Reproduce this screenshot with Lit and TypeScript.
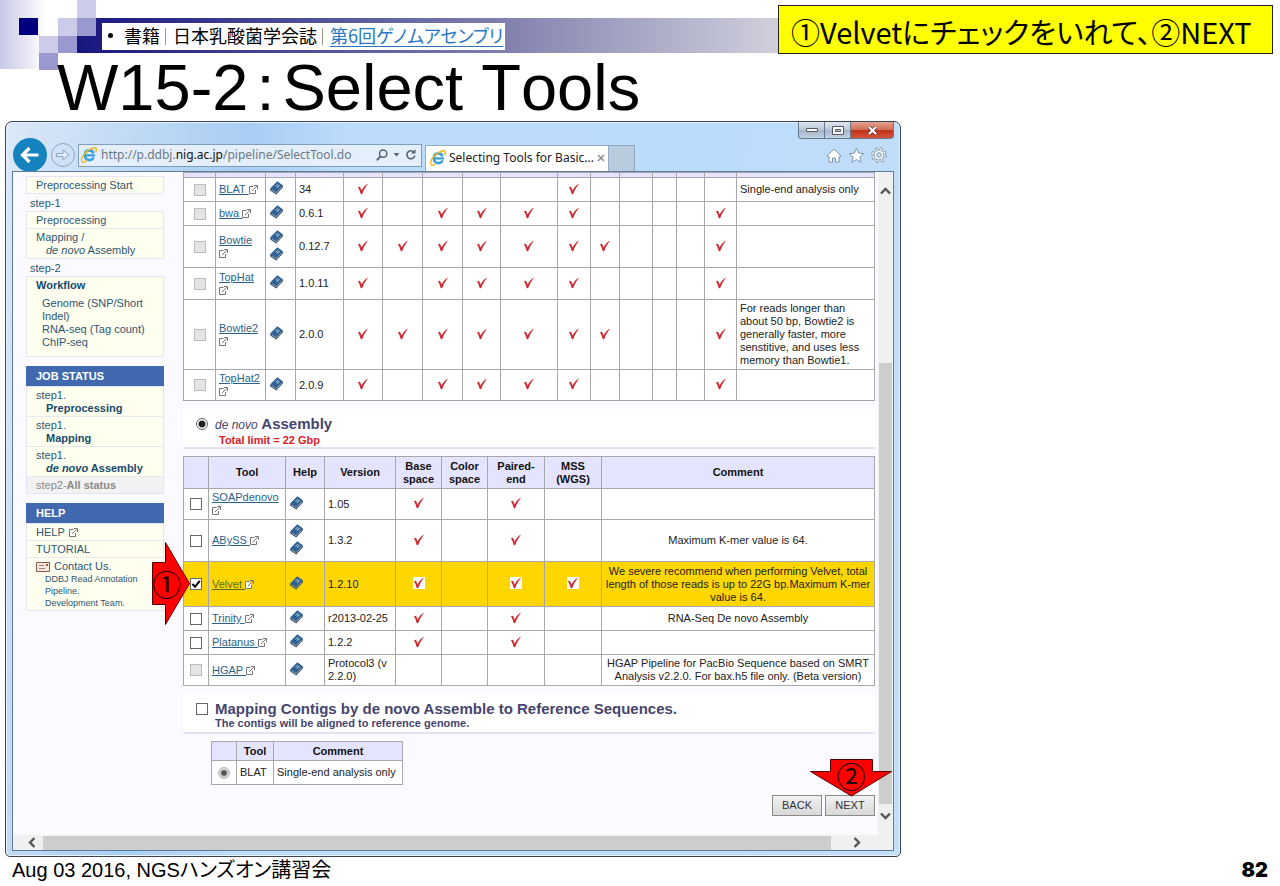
import { LitElement, html, css, svg, nothing } from "lit";
import { customElement } from "lit/decorators.js";
import { classMap } from "lit/directives/class-map.js";

interface Tool {
  name: string;
  version: string;
  size: string;
  checks: number[];
  comment?: string;
  manuals?: number;
  enabled?: boolean;
  selected?: boolean;
}

const MAPPING_TOOLS: Tool[] = [
  { name: "BLAT", version: "34", size: "h24", checks: [0, 5], comment: "Single-end analysis only" },
  { name: "bwa", version: "0.6.1", size: "h24", checks: [0, 2, 3, 4, 5, 10] },
  { name: "Bowtie", version: "0.12.7", size: "h42", checks: [0, 1, 2, 3, 4, 5, 6, 10], manuals: 2 },
  { name: "TopHat", version: "1.0.11", size: "h32", checks: [0, 2, 3, 4, 5, 10] },
  {
    name: "Bowtie2",
    version: "2.0.0",
    size: "h70",
    checks: [0, 1, 2, 3, 4, 5, 6, 10],
    comment:
      "For reads longer than about 50 bp, Bowtie2 is generally faster, more senstitive, and uses less memory than Bowtie1.",
  },
  { name: "TopHat2", version: "2.0.9", size: "h31", checks: [0, 2, 3, 4, 5, 10] },
];

const ASSEMBLY_TOOLS: Tool[] = [
  { name: "SOAPdenovo", version: "1.05", size: "h31", checks: [0, 2], enabled: true },
  {
    name: "ABySS",
    version: "1.3.2",
    size: "h42",
    checks: [0, 2],
    manuals: 2,
    enabled: true,
    comment: "Maximum K-mer value is 64.",
  },
  {
    name: "Velvet",
    version: "1.2.10",
    size: "h45",
    checks: [0, 2, 3],
    enabled: true,
    selected: true,
    comment:
      "We severe recommend when performing Velvet, total length of those reads is up to 22G bp.Maximum K-mer value is 64.",
  },
  {
    name: "Trinity",
    version: "r2013-02-25",
    size: "h24",
    checks: [0, 2],
    enabled: true,
    comment: "RNA-Seq De novo Assembly",
  },
  { name: "Platanus", version: "1.2.2", size: "h24", checks: [0, 2], enabled: true },
  {
    name: "HGAP",
    version: "Protocol3 (v 2.2.0)",
    size: "h31",
    checks: [],
    comment:
      "HGAP Pipeline for PacBio Sequence based on SMRT Analysis v2.2.0. For bax.h5 file only. (Beta version)",
  },
];

const icon = (w: number, h: number, body: unknown, cls = "") =>
  html`<svg class=${cls} width=${w} height=${h} viewBox="0 0 ${w} ${h}" aria-hidden="true">${body}</svg>`;

const externalIcon = () =>
  icon(
    9,
    9,
    svg`<path d="M4.5 1.500H.5v7h6V5" fill="#fff" stroke="#777" /><path d="M3 6 7.800 1.200M5 .5h3.500V4" fill="none" stroke="#777" />`,
    "ext",
  );

const bookIcon = () =>
  icon(
    13,
    14,
    svg`<path d="M.3 7.200 7.300.300 12.800 4.300 6 11z" fill="#2b6196" />
      <path d="M.3 7.200 6 11 12.800 4.300v2.300L6.200 13.500.300 9.400z" fill="#16304c" />
      <path d="M1.300 8.900 6.200 12.200 12 6.200" fill="none" stroke="#c2d4e4" stroke-width=".8" />
      <path d="M5 5.300 7.600 2.700 10 4.500 7.400 7.100z" fill="#9ab6c8" />
      <path d="M5.200 6.800 8.800 3.300" stroke="#1d4268" stroke-width=".8" />`,
    "book",
  );

const checkIcon = () =>
  icon(
    12,
    12,
    svg`<path d="M1 4.300C2 3.500 3.100 3.600 3.500 4.800L4.500 7.600C5.900 4.800 8.200 1.900 11.200.400 8.900 3.200 6.700 6.600 5.500 10.600 4.900 11.500 4 11.400 3.600 10.700 3 8.400 2.100 6.200 1 4.300z" fill="#cf2a30" />`,
    "mark",
  );

const ieIcon = () =>
  icon(
    16,
    16,
    svg`<path d="M12.400 6.600C12 4.600 10.300 3.400 8.300 3.400 5.700 3.400 3.900 5.300 3.900 8.200c0 2.900 1.800 4.900 4.500 4.900 2 0 3.500-.9 4.200-2.700" fill="none" stroke="#3aa0dc" stroke-width="2.600" />
      <path d="M4 8.400h10.100" stroke="#3aa0dc" stroke-width="2.200" />
      <path d="M1.200 14.800C-.8 12.500 2.500 6.800 6.800 3.600 10.400.900 14.400-.200 15.200 1.600c.4.900 0 2.200-.7 3.400" fill="none" stroke="#e9bb26" stroke-width="1.500" />
      <path d="M1.200 14.800c1.100.7 3 .1 4.600-.9" fill="none" stroke="#e9bb26" stroke-width="1.500" />`,
  );

@customElement("app-root")
export class AppRoot extends LitElement {
  static styles = css`
    :host {
      display: block;
      font-family: "Liberation Sans", Arial, sans-serif;
      color: #222;
      background: #fff;
    }
    * {
      box-sizing: border-box;
    }
    h1, h2, p, ul {
      margin: 0;
      padding: 0;
      font-weight: normal;
    }
    ul {
      list-style: none;
    }
    button {
      margin: 0;
      padding: 0;
      border: 0;
      background: none;
      font: inherit;
      color: inherit;
      display: flex;
      align-items: center;
      justify-content: center;
    }
    svg {
      display: block;
      flex: none;
    }

    /* Slide heading */
    .banner {
      background:
        linear-gradient(#000080, #000080) 19px 18px / 19px 17px no-repeat,
        linear-gradient(#ccccea, #ccccea) 77px 0 / 19px 18px no-repeat,
        linear-gradient(#ccccea, #ccccea) 58px 18px / 19px 18px no-repeat,
        linear-gradient(#9999cf, #9999cf) 77px 18px / 19px 18px no-repeat,
        linear-gradient(#ccccea, #ccccea) 39px 36px / 19px 17px no-repeat,
        linear-gradient(#9999cf, #9999cf) 58px 36px / 19px 17px no-repeat,
        linear-gradient(#9999cf, #9999cf) 39px 53px / 19px 17px no-repeat,
        linear-gradient(90deg, #161680, #7f7fae 35%, #cfcfdc 58%, #ffffff) 77px 18px / calc(100% - 77px) 35px no-repeat,
        linear-gradient(90deg, #c8c8e8, #ffffff) 0 0 / 46px 69px no-repeat;
    }
    .banner-row {
      display: flex;
      justify-content: space-between;
      align-items: flex-start;
      padding: 5px 7px 0 102px;
    }
    .crumbs {
      display: flex;
      align-items: center;
      height: 27px;
      margin-top: 18px;
      padding: 0 2px 3px 6px;
      background: #fff;
      color: #000;
      font: 18px/24px "Noto Sans CJK JP", sans-serif;
      font-feature-settings: "palt";
      white-space: nowrap;
    }
    .crumbs i {
      width: 1px;
      height: 17px;
      margin: 2px 7px 0 5px;
      background: #a09a8c;
    }
    .crumbs .dot {
      width: 5px;
      height: 5px;
      margin-right: 11px;
      border-radius: 50%;
      background: #000;
    }
    .crumbs a {
      color: #2a78c4;
      text-underline-offset: 3px;
      text-decoration-thickness: 1px;
    }
    .callout {
      flex: 0 1 495px;
      height: 49px;
      padding: 0 12px;
      border: 1px solid #222;
      background: #ff0;
      color: #000;
      font: 29px/50px "Noto Sans CJK JP", sans-serif;
      font-feature-settings: "palt";
      white-space: nowrap;
    }
    .title {
      height: 67px;
      padding: 2px 0 0 57px;
      color: #000;
      font-size: 65px;
      font-kerning: none;
      line-height: 64px;
    }
    .title span {
      padding: 0 8px;
    }

    /* Browser window */
    .window {
      width: 70%;
      margin-left: 5px;
      padding: 0 6px 5px;
      border: 1px solid #3b4450;
      border-radius: 7px 7px 5px 5px;
      background: linear-gradient(100deg, #dbe8f8 0, #b9d6f4 16%, #a9cdf3 24%, #bddcfb 34%, #bcdcfc 70%, #c3def8 100%);
      box-shadow: inset 0 0 0 1px #e6f2fd;
    }
    .caption {
      display: flex;
      justify-content: flex-end;
      height: 17px;
    }
    .caption button {
      width: 26px;
      height: 17px;
      border: 1px solid #66788c;
      border-top: 0;
      border-right: 0;
      background: linear-gradient(#dfe7f0, #b9c7d6 50%, #a3b4c7 51%, #c3d2e2);
    }
    .caption .min {
      border-radius: 0 0 0 4px;
    }
    .caption .close {
      width: 44px;
      border-right: 1px solid #66788c;
      border-radius: 0 0 4px 0;
      background: linear-gradient(#e5a293, #d06a55 50%, #bd3218 51%, #d5543a);
    }
    .nav {
      display: flex;
      align-items: center;
      height: 32px;
      color: #6b7886;
      font: 12px/16px "Noto Sans", sans-serif;
    }
    .back {
      width: 34px;
      height: 34px;
      margin-left: 1px;
      border-radius: 50%;
      background: #1583bd;
    }
    .forward {
      width: 24px;
      height: 24px;
      margin: 0 3px 0 4px;
      border: 1px solid #8fa5bd;
      border-radius: 50%;
    }
    .address {
      display: flex;
      align-items: center;
      gap: 4px;
      width: 344px;
      height: 23px;
      padding: 0 4px 0 2px;
      border: 1px solid #7f9dbd;
      background: #e4effb;
    }
    .address b {
      font-weight: normal;
      color: #111;
    }
    .address .url {
      flex: 1;
      white-space: nowrap;
    }
    .tab {
      align-self: flex-end;
      display: flex;
      align-items: center;
      gap: 3px;
      width: 184px;
      height: 26px;
      margin-left: 3px;
      padding: 0 5px 2px 4px;
      border: 1px solid #93abc4;
      border-bottom: 0;
      background: #fff;
      color: #222;
      white-space: nowrap;
    }
    .tab .label {
      flex: 1;
    }
    .newtab {
      align-self: flex-end;
      width: 26px;
      height: 26px;
      border: 1px solid #8aa5c0;
      border-width: 1px 1px 0 0;
      background: #b9cbdc;
    }
    .tools {
      display: flex;
      gap: 6px;
      margin-left: auto;
      padding-right: 7px;
    }

    .viewport {
      display: grid;
      grid-template-columns: minmax(0, 1fr) 15px;
      grid-template-rows: auto 15px;
      position: relative;
      border: 1px solid #5d7b9c;
      background: #f0f0f0;
    }
    .page {
      display: flex;
      gap: 19px;
      padding: 0 3px 19px 13px;
      background: #fafaff;
      font-size: 11px;
      line-height: 13px;
    }
    .vbar {
      display: flex;
      flex-direction: column;
      align-items: stretch;
      justify-content: space-between;
      padding: 14px 0 14px;
    }
    .vbar .thumb {
      flex: 1;
      margin: 168px 1px 8px 1px;
      background: #cdcdcd;
    }
    .hbar {
      display: flex;
      align-items: center;
      padding: 0 16px 0 14px;
    }
    .hbar .thumb {
      flex: 1;
      height: 14px;
      margin: 0 22px 0 7px;
      background: #cdcdcd;
    }

    /* Side menu */
    .side {
      flex: 0 0 138px;
      padding-top: 4px;
      color: #2d5674;
    }
    .side a {
      color: inherit;
      text-decoration: none;
    }
    .box {
      border: 1px solid #e4e4f4;
      background: #fffff0;
    }
    .box li {
      padding: 2px 0 1px 9px;
    }
    .box li + li {
      border-top: 1px solid #e8e8ee;
    }
    .step {
      padding: 3px 0 1px 4px;
    }
    .sub {
      display: block;
      padding-left: 10px;
    }
    .flow .item {
      padding-bottom: 7px;
    }
    .flow .sub {
      padding-left: 6px;
    }
    .flow .first {
      padding-top: 5px;
    }
    .flow b,
    .box .strong {
      color: #164a6c;
      font-weight: bold;
    }
    .head {
      height: 20px;
      margin-top: 9px;
      padding-left: 10px;
      background: #4169b0;
      color: #fff;
      font-size: 11px;
      font-weight: bold;
      line-height: 20px;
    }
    .box .off {
      background: #f2f2f2;
      color: #8a8a8a;
    }
    .inline {
      display: flex;
      align-items: center;
      gap: 4px;
    }
    .small {
      display: block;
      padding-left: 9px;
      font-size: 9px;
      line-height: 12px;
    }

    /* Tool tables */
    .main {
      flex: 1;
      min-width: 0;
    }
    table {
      width: 100%;
      table-layout: fixed;
      border-collapse: collapse;
    }
    th,
    td {
      padding: 0 3px;
      border: 1px solid #a8a8ac;
      text-align: left;
      vertical-align: middle;
    }
    td {
      background: #fff;
    }
    th {
      padding: 0 2px;
      background: #e4e4ff;
      color: #111;
      text-align: center;
      font-weight: bold;
    }
    .ctr {
      padding: 0;
      text-align: center;
    }
    .ctr input {
      margin: 0 auto;
    }
    .mark {
      margin: 0 auto 2px;
    }
    td a {
      color: #2b618d;
    }
    .ext {
      display: inline-block;
      vertical-align: -1px;
    }
    .book {
      margin: 0 0 3px 1px;
    }
    .mid {
      text-align: center;
    }
    .h5 { height: 5px; }
    .h19 { height: 19px; }
    .h24 { height: 24px; }
    .h31 { height: 31px; }
    .h32 { height: 32px; }
    .h42 { height: 42px; }
    .h45 { height: 45px; }
    .h70 { height: 70px; }
    .w24 { width: 24px; }
    .w25 { width: 25px; }
    .w28 { width: 28px; }
    .w29 { width: 29px; }
    .w30 { width: 30px; }
    .w32 { width: 32px; }
    .w33 { width: 33px; }
    .w37 { width: 37px; }
    .w38 { width: 38px; }
    .w39 { width: 39px; }
    .w40 { width: 40px; }
    .w46 { width: 46px; }
    .w48 { width: 48px; }
    .w50 { width: 50px; }
    .w57 { width: 57px; }
    .w71 { width: 71px; }
    .w77 { width: 77px; }
    .picked td {
      background: #ffd600;
    }
    .picked .mark {
      background: #fff;
    }
    .picked a {
      color: #5d6a28;
    }
    .anchor {
      position: relative;
    }

    input {
      appearance: none;
      display: block;
      width: 12px;
      height: 12px;
      margin: 0;
      border: 1px solid #666;
      background: #fff;
    }
    input:disabled {
      border-color: #bcbcbc;
      background: #e4e4e4;
    }
    input[type="checkbox"]:checked {
      background: #fff
        url("data:image/svg+xml,%3Csvg xmlns='http://www.w3.org/2000/svg' viewBox='0 0 10 10'%3E%3Cpath d='M1.500 5 4 7.800 8.800 1.800' fill='none' stroke='%23000' stroke-width='2'/%3E%3C/svg%3E");
    }
    input[type="radio"] {
      border-radius: 50%;
    }
    input[type="radio"]:checked {
      background: radial-gradient(circle, #222 0 3px, #fff 4px);
    }
    input[type="radio"]:disabled {
      border-color: #b4b4b4;
      background: radial-gradient(circle, #555 0 2px, #dcdcdc 4px);
    }

    .section {
      display: flex;
      align-items: flex-start;
      gap: 7px;
      height: 40px;
      margin: 8px 0 7px;
      padding: 8px 0 0 13px;
      border-bottom: 2px solid #e2e2f4;
      background: #fff;
    }
    .section h2 {
      margin-top: -2px;
      color: #45456f;
      font-size: 15px;
      font-weight: bold;
      line-height: 17px;
    }
    .section em {
      font-size: 12px;
      font-weight: normal;
    }
    .section p {
      color: #45456f;
      font-weight: bold;
    }
    .section .limit {
      padding-left: 4px;
      color: #dc2026;
    }
    .section input {
      margin-top: 1px;
    }
    .contigs {
      width: 192px;
      margin-left: 28px;
    }
    .actions {
      display: flex;
      justify-content: flex-end;
      gap: 3px;
      margin-top: 10px;
    }
    .actions button {
      width: 50px;
      height: 21px;
      border: 1px solid #8a8a8a;
      background: linear-gradient(#f2f2f2, #d8d8d8);
      color: #333;
      line-height: 19px;
    }

    /* Numbered arrows laid over the browser page */
    .arrow {
      position: absolute;
      z-index: 1;
      display: grid;
      color: #200;
      font: 29px/29px "Noto Sans CJK JP", sans-serif;
      text-align: left;
    }
    .arrow > * {
      grid-area: 1 / 1;
    }
    .arrow.right {
      left: -32px;
      top: -21px;
    }
    .arrow.right span {
      align-self: center;
    }
    .arrow.down {
      right: -18px;
      top: -36px;
    }
    .arrow.down span {
      justify-self: center;
      padding-top: 2px;
    }

    .footer {
      display: flex;
      justify-content: space-between;
      align-items: center;
      padding: 0 12px;
      height: 26px;
      color: #000;
      font-family: "Liberation Sans", "Noto Sans CJK JP", sans-serif;
      font-size: 20px;
      line-height: 26px;
      font-feature-settings: "palt";
    }
    .footer b {
      font-family: Inter, sans-serif;
      font-weight: 900;
    }
  `;

  private toolRow(tool: Tool, columns: number, commentClass: string) {
    const cells = Array.from({ length: columns }, (_, i) => i);
    return html`<tr class=${classMap({ [tool.size]: true, picked: !!tool.selected })}>
      <td class=${classMap({ ctr: true, anchor: !!tool.selected })}>
        <input type="checkbox" aria-label=${tool.name} ?disabled=${!tool.enabled} ?checked=${!!tool.selected} />
        ${tool.selected
          ? html`<div class="arrow right">
              ${icon(38, 85, svg`<path d="M.5 21.500h13V1.500L37.500 42.500 13.500 83.500V63.500H.5z" fill="#f00" stroke="#500" />`)}
              <span>①</span>
            </div>`
          : nothing}
      </td>
      <td><a href="#">${tool.name} </a>${externalIcon()}</td>
      <td>${Array.from({ length: tool.manuals ?? 1 }, bookIcon)}</td>
      <td>${tool.version}</td>
      ${cells.map((i) => html`<td class="ctr">${tool.checks.includes(i) ? checkIcon() : nothing}</td>`)}
      <td class=${commentClass}>${tool.comment ?? nothing}</td>
    </tr>`;
  }

  private sideMenu() {
    return html`<nav class="side">
      <ul class="box"><li><a href="#">Preprocessing Start</a></li></ul>
      <p class="step">step-1</p>
      <ul class="box">
        <li><a href="#">Preprocessing</a></li>
        <li><a href="#">Mapping /<span class="sub"><em>de novo</em> Assembly</span></a></li>
      </ul>
      <p class="step">step-2</p>
      <ul class="box flow">
        <li class="item">
          <b>Workflow</b>
          <a class="sub first" href="#">Genome (SNP/Short Indel)</a>
          <a class="sub" href="#">RNA-seq (Tag count)</a>
          <a class="sub" href="#">ChIP-seq</a>
        </li>
      </ul>
      <h2 class="head">JOB STATUS</h2>
      <ul class="box">
        <li><a href="#">step1.<span class="sub strong">Preprocessing</span></a></li>
        <li><a href="#">step1.<span class="sub strong">Mapping</span></a></li>
        <li><a href="#">step1.<span class="sub strong"><em>de novo</em> Assembly</span></a></li>
        <li class="off">step2-<b>All status</b></li>
      </ul>
      <h2 class="head">HELP</h2>
      <ul class="box">
        <li><a class="inline" href="#">HELP ${externalIcon()}</a></li>
        <li><a href="#">TUTORIAL</a></li>
        <li>
          <a class="inline" href="#">
            ${icon(
              14,
              10,
              svg`<path d="M.5.5h13v9H.5z" fill="#f8e8e0" stroke="#8a5a4a" /><path d="M3 3.500h5M3 6.500h6" stroke="#a08078" /><path d="M10 2h2v2h-2z" fill="#b05040" />`,
            )}
            Contact Us.</a>
          <span class="small">DDBJ Read Annotation Pipeline.<br />Development Team.</span>
        </li>
      </ul>
    </nav>`;
  }

  private mainArea() {
    const mappingCols = [32, 50, 30, 48, 39, 40, 40, 38, 57, 33, 29, 33, 24, 28, 32];
    return html`<main class="main">
      <table>
        <thead>
          <tr class="h5">
            ${mappingCols.map((w) => html`<th class="w${w}"></th>`)}
            <th></th>
          </tr>
        </thead>
        <tbody>
          ${MAPPING_TOOLS.map((t) => this.toolRow(t, 11, ""))}
        </tbody>
      </table>

      <section class="section">
        <input type="radio" id="denovo" checked />
        <div>
          <h2><label for="denovo"><em>de novo</em> Assembly</label></h2>
          <p class="limit">Total limit = 22 Gbp</p>
        </div>
      </section>

      <table>
        <thead>
          <tr class="h32">
            <th class="w25"></th>
            <th class="w77">Tool</th>
            <th class="w39">Help</th>
            <th class="w71">Version</th>
            <th class="w46">Base space</th>
            <th class="w46">Color space</th>
            <th class="w57">Paired-end</th>
            <th class="w57">MSS (WGS)</th>
            <th>Comment</th>
          </tr>
        </thead>
        <tbody>
          ${ASSEMBLY_TOOLS.map((t) => this.toolRow(t, 4, "mid"))}
        </tbody>
      </table>

      <section class="section">
        <input type="checkbox" id="contigs" />
        <div>
          <h2><label for="contigs">Mapping Contigs by de novo Assemble to Reference Sequences.</label></h2>
          <p>The contigs will be aligned to reference genome.</p>
        </div>
      </section>

      <table class="contigs">
        <thead>
          <tr class="h19">
            <th class="w25"></th>
            <th class="w37">Tool</th>
            <th>Comment</th>
          </tr>
        </thead>
        <tbody>
          <tr class="h24">
            <td class="ctr"><input type="radio" aria-label="BLAT" checked disabled /></td>
            <td>BLAT</td>
            <td>Single-end analysis only</td>
          </tr>
        </tbody>
      </table>

      <div class="actions anchor">
        <button type="button">BACK</button>
        <button type="button">NEXT</button>
        <div class="arrow down">
          ${icon(84, 38, svg`<path d="M21.500.5h42v12h19L42.500 37 1.500 12.500h20z" fill="#f00" stroke="#500" />`)}
          <span>②</span>
        </div>
      </div>
    </main>`;
  }

  private browser() {
    return html`<div class="window">
      <div class="caption">
        <button class="min" aria-label="Minimize">
          ${icon(12, 6, svg`<path d="M.5 1.500h11v3H.5z" fill="#fff" stroke="#556" />`)}
        </button>
        <button aria-label="Maximize">
          ${icon(12, 9, svg`<path d="M.5.5h11v8H.5z" fill="#fff" stroke="#556" /><path d="M3.500 3.500h5v2h-5z" fill="#b8c6d6" stroke="#556" />`)}
        </button>
        <button class="close" aria-label="Close">
          ${icon(11, 9, svg`<path d="M2 1l7 7M9 1 2 8" stroke="#5a3038" stroke-width="3.600" /><path d="M2 1l7 7M9 1 2 8" stroke="#fff" stroke-width="2.200" />`)}
        </button>
      </div>
      <div class="nav">
        <button class="back" aria-label="Back">
          ${icon(20, 18, svg`<path d="M18.500 9H3M9.500 2 2.500 9l7 7" fill="none" stroke="#fff" stroke-width="3.200" />`)}
        </button>
        <button class="forward" aria-label="Forward">
          ${icon(14, 12, svg`<path d="M.5 4.500H7V1l6 5-6 5V7.500H.5z" fill="#dfeaf6" stroke="#91a6bc" />`)}
        </button>
        <div class="address">
          ${ieIcon()}
          <span class="url">http://p.ddbj.<b>nig.ac.jp</b>/pipeline/SelectTool.do</span>
          <button aria-label="Search">
            ${icon(12, 12, svg`<circle cx="7.200" cy="4.600" r="3.700" fill="none" stroke="#59646f" stroke-width="1.500" /><path d="M4.500 7.500.8 11.300" stroke="#59646f" stroke-width="1.800" />`)}
          </button>
          <button aria-label="Show suggestions">${icon(9, 4, svg`<path d="M1.500 0h6l-3 3.500z" fill="#59646f" />`)}</button>
          <button aria-label="Refresh">
            ${icon(12, 12, svg`<path d="M8.800 3A4 4 0 1 0 9.800 6.600" fill="none" stroke="#59646f" stroke-width="1.600" /><path d="M6 4.500h4.500V0z" fill="#59646f" />`)}
          </button>
        </div>
        <div class="tab">
          ${ieIcon()}<span class="label">Selecting Tools for Basic...</span>
          <button aria-label="Close tab">
            ${icon(8, 8, svg`<path d="M1 1l6 6M7 1 1 7" stroke="#8b8f94" stroke-width="1.500" />`)}
          </button>
        </div>
        <button class="newtab" aria-label="New tab"></button>
        <div class="tools">
          <button aria-label="Home">
            ${icon(16, 15, svg`<path d="M1 8 8 1.200 15 8l-1.200 1.200L13 8.500v5.700H9.500V10h-3v4.200H3V8.500l-.8.700z" fill="#fff" stroke="#8194a8" />`)}
          </button>
          <button aria-label="Favorites">
            ${icon(17, 16, svg`<path d="m8.500 1.200 2.100 4.900 5.200.5-3.900 3.500 1.100 5.200-4.500-2.700L4 15.300l1.100-5.200L1.200 6.600l5.200-.5z" fill="#fff" stroke="#8194a8" />`)}
          </button>
          <button aria-label="Tools">
            ${icon(
              16,
              16,
              svg`<circle cx="8" cy="8" r="6" fill="none" stroke="#8194a8" stroke-width="3.600" stroke-dasharray="2.700 2.012" />
                <circle cx="8" cy="8" r="5" fill="#fff" stroke="#8194a8" />
                <circle cx="8" cy="8" r="6" fill="none" stroke="#fff" stroke-width="1.800" stroke-dasharray="1.700 3.012" stroke-dashoffset="-.5" />
                <circle cx="8" cy="8" r="2.300" fill="#c3def8" stroke="#8194a8" />`,
            )}
          </button>
        </div>
      </div>
      <div class="viewport">
        <div class="page">${this.sideMenu()} ${this.mainArea()}</div>
        <div class="vbar">
          <button aria-label="Scroll up">${icon(11, 9, svg`<path d="M1 7.500 5.500 3 10 7.500" fill="none" stroke="#555" stroke-width="2.400" />`)}</button>
          <div class="thumb"></div>
          <button aria-label="Scroll down">${icon(11, 9, svg`<path d="M1 1.500 5.500 6 10 1.500" fill="none" stroke="#555" stroke-width="2.400" />`)}</button>
        </div>
        <div class="hbar">
          <button aria-label="Scroll left">${icon(9, 11, svg`<path d="M7.500 1 3 5.500 7.500 10" fill="none" stroke="#555" stroke-width="2.400" />`)}</button>
          <div class="thumb"></div>
          <button aria-label="Scroll right">${icon(9, 11, svg`<path d="M1.500 1 6 5.500 1.500 10" fill="none" stroke="#555" stroke-width="2.400" />`)}</button>
        </div>
      </div>
    </div>`;
  }

  render() {
    return html`
      <header class="banner">
        <div class="banner-row">
          <div class="crumbs">
            <span class="dot"></span>書籍<i></i>日本乳酸菌学会誌<i></i><a href="#">第6回ゲノムアセンブリ</a>
          </div>
          <p class="callout">①Velvetにチェックをいれて、②NEXT</p>
        </div>
        <h1 class="title">W15-2<span>:</span>Select Tools</h1>
      </header>
      ${this.browser()}
      <footer class="footer"><span>Aug 03 2016, NGSハンズオン講習会</span><b>82</b></footer>
    `;
  }
}
